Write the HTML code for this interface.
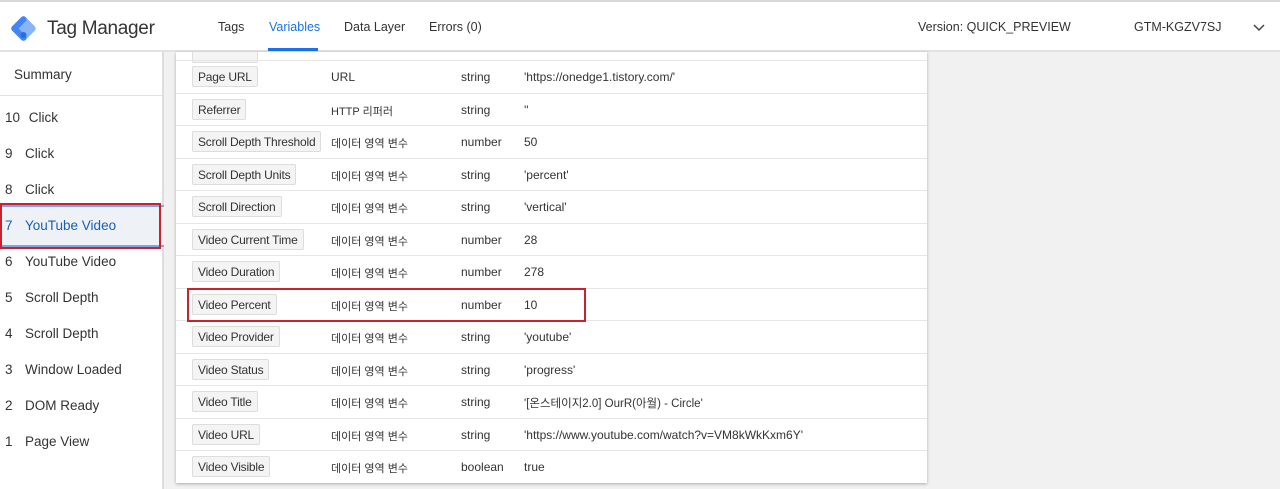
<!DOCTYPE html>
<html><head><meta charset="utf-8"><style>
*{margin:0;padding:0;box-sizing:border-box}
body{width:1280px;height:489px;overflow:hidden;background:#f1f1f1;font-family:"Liberation Sans","Noto Sans CJK KR",sans-serif;color:#333;position:relative}
.top{position:absolute;left:0;top:0;width:1280px;height:52px;background:#fff;border-top:2px solid #d8d8d8;border-bottom:2px solid #e2e2e2}
.a{position:absolute;white-space:nowrap}
.side{position:absolute;left:0;top:52px;width:164px;height:437px;background:#fff;border-right:2px solid #ddd}
.si{position:absolute;left:5px;font-size:13.5px;color:#333}
.si b{font-weight:normal;display:inline-block;width:20px}
.card{position:absolute;left:176px;top:52px;width:751px;height:431px;background:#fff;box-shadow:0 1px 3px rgba(0,0,0,.3);overflow:hidden}
.row{position:absolute;left:0;width:751px;height:32.5px;border-top:1px solid #e6e6e6;font-size:12px}
.row span{position:absolute;top:9px;line-height:14px}
.row span.k{font-size:11px;top:11px}
.btn{position:absolute;left:16px;top:5px;height:21px;padding:3px 5px 0;background:#f4f4f4;border:1px solid #ddd;border-radius:2px;font-size:12px;color:#333;letter-spacing:-0.2px}
</style></head><body>
<div class="top">
<svg class="a" style="left:9px;top:12px" width="29" height="29" viewBox="0 0 29 29"><g transform="rotate(45 14.5 14.5)"><rect x="5" y="5" width="19" height="19" rx="3" fill="#8ab4f8"/><rect x="5" y="5" width="6" height="19" rx="3" fill="#4285f4"/><rect x="5" y="18" width="19" height="6" rx="3" fill="#4285f4"/></g><circle cx="14.5" cy="21" r="3" fill="#246fdb"/></svg>
<div class="a" style="left:47px;top:16px;font-size:19px;letter-spacing:-0.3px;color:#333">Tag Manager</div>
<div class="a" style="left:218px;top:18px;font-size:12.5px">Tags</div>
<div class="a" style="left:269px;top:18px;font-size:12.5px;color:#1a73e8">Variables</div>
<div class="a" style="left:268px;top:46px;width:50px;height:3px;background:#1a73e8"></div>
<div class="a" style="left:344px;top:18px;font-size:12.5px">Data Layer</div>
<div class="a" style="left:429px;top:18px;font-size:12.5px">Errors (0)</div>
<div class="a" style="left:918px;top:18px;font-size:12.5px">Version: QUICK_PREVIEW</div>
<div class="a" style="left:1134px;top:18px;font-size:12.5px">GTM-KGZV7SJ</div>
<svg class="a" style="left:1253px;top:22px" width="12" height="8"><path d="M1 1l5 5 5-5" stroke="#444" stroke-width="1.5" fill="none"/></svg>
</div>
<div class="side">
<div class="si" style="left:14px;top:15px">Summary</div>
<div class="a" style="left:0;top:43px;width:162px;height:1px;background:#e2e2e2"></div>
<div class="si" style="top:58px"><b>10</b>&nbsp;Click</div>
<div class="si" style="top:94px"><b>9</b>Click</div>
<div class="si" style="top:130px"><b>8</b>Click</div>
<div class="a" style="left:0;top:153px;width:164px;height:42px;background:#eef1f6;border-top:2px solid #7aa7e8;border-bottom:2px solid #7aa7e8"></div>
<div class="si" style="top:166px;color:#1a5fb4"><b>7</b>YouTube Video</div>
<div class="a" style="left:0;top:151px;width:161px;height:46px;border:2px solid #c8232c"></div>
<div class="si" style="top:202px"><b>6</b>YouTube Video</div>
<div class="si" style="top:238px"><b>5</b>Scroll Depth</div>
<div class="si" style="top:274px"><b>4</b>Scroll Depth</div>
<div class="si" style="top:310px"><b>3</b>Window Loaded</div>
<div class="si" style="top:346px"><b>2</b>DOM Ready</div>
<div class="si" style="top:382px"><b>1</b>Page View</div>
</div>
<div class="card">
<div class="btn" style="top:-10px;width:66px"></div>
<div class="row" style="top:8px"><div class="btn">Page URL</div><span style="left:155px">URL</span><span style="left:285px">string</span><span style="left:348px">'https://onedge1.tistory.com/'</span></div>
<div class="row" style="top:40.5px"><div class="btn">Referrer</div><span class="k" style="left:155px">HTTP 리퍼러</span><span style="left:285px">string</span><span style="left:348px">''</span></div>
<div class="row" style="top:73px"><div class="btn">Scroll Depth Threshold</div><span class="k" style="left:155px">데이터 영역 변수</span><span style="left:285px">number</span><span style="left:348px">50</span></div>
<div class="row" style="top:105.5px"><div class="btn">Scroll Depth Units</div><span class="k" style="left:155px">데이터 영역 변수</span><span style="left:285px">string</span><span style="left:348px">'percent'</span></div>
<div class="row" style="top:138px"><div class="btn">Scroll Direction</div><span class="k" style="left:155px">데이터 영역 변수</span><span style="left:285px">string</span><span style="left:348px">'vertical'</span></div>
<div class="row" style="top:170.5px"><div class="btn">Video Current Time</div><span class="k" style="left:155px">데이터 영역 변수</span><span style="left:285px">number</span><span style="left:348px">28</span></div>
<div class="row" style="top:203px"><div class="btn">Video Duration</div><span class="k" style="left:155px">데이터 영역 변수</span><span style="left:285px">number</span><span style="left:348px">278</span></div>
<div class="row" style="top:235.5px"><div class="btn">Video Percent</div><span class="k" style="left:155px">데이터 영역 변수</span><span style="left:285px">number</span><span style="left:348px">10</span></div>
<div class="row" style="top:268px"><div class="btn">Video Provider</div><span class="k" style="left:155px">데이터 영역 변수</span><span style="left:285px">string</span><span style="left:348px">'youtube'</span></div>
<div class="row" style="top:300.5px"><div class="btn">Video Status</div><span class="k" style="left:155px">데이터 영역 변수</span><span style="left:285px">string</span><span style="left:348px">'progress'</span></div>
<div class="row" style="top:333px"><div class="btn">Video Title</div><span class="k" style="left:155px">데이터 영역 변수</span><span style="left:285px">string</span><span class="k" style="left:348px;font-size:11.5px">'[온스테이지2.0] OurR(아월) - Circle'</span></div>
<div class="row" style="top:365.5px"><div class="btn">Video URL</div><span class="k" style="left:155px">데이터 영역 변수</span><span style="left:285px">string</span><span style="left:348px">'https://www.youtube.com/watch?v=VM8kWkKxm6Y'</span></div>
<div class="row" style="top:398px"><div class="btn">Video Visible</div><span class="k" style="left:155px">데이터 영역 변수</span><span style="left:285px">boolean</span><span style="left:348px">true</span></div>
<div class="a" style="left:11px;top:236px;width:399px;height:34px;border:2px solid #c8232c"></div>
</div>
</body></html>
